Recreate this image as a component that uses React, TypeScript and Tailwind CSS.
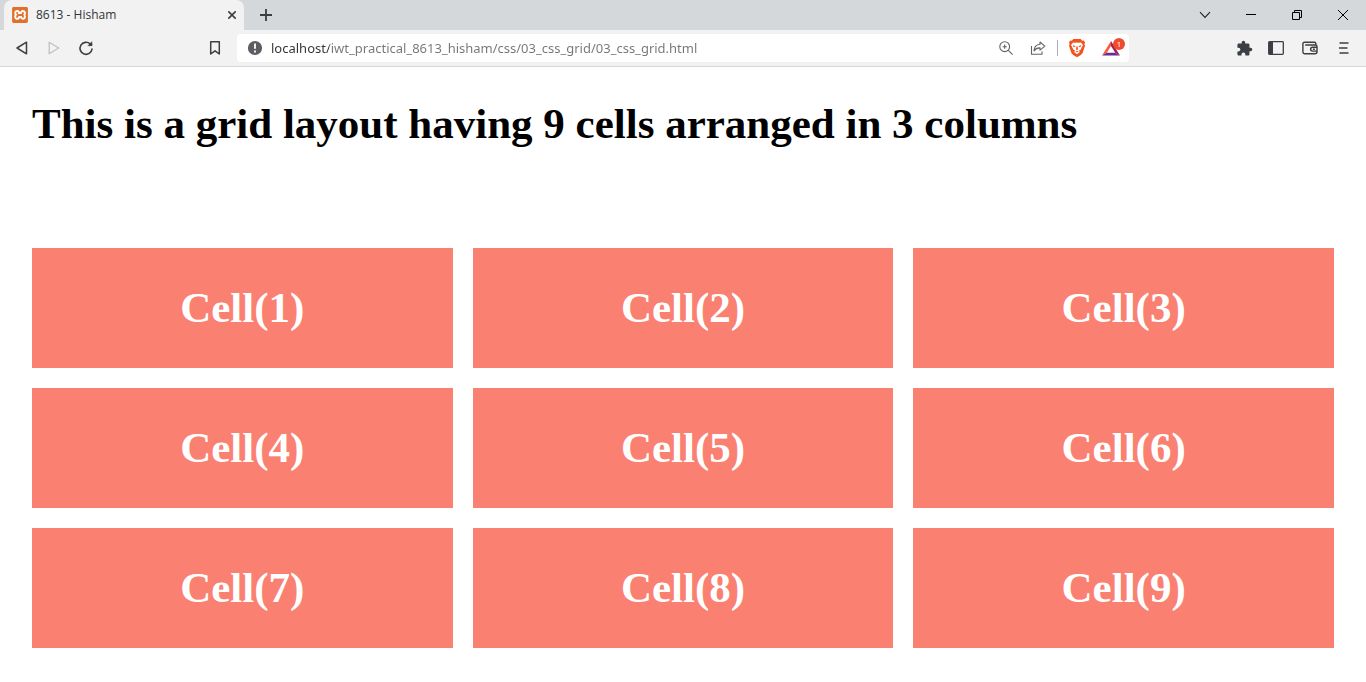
import type { ReactNode } from "react";
import { MdExtension } from "react-icons/md";
import { SiXampp } from "react-icons/si";

function IconButton({ label, className, children }: { label: string; className?: string; children: ReactNode }) {
  return (
    <button type="button" aria-label={label} className={"flex h-7 shrink-0 items-center justify-center text-[#3b3e42] " + (className ?? "w-8")}>
      {children}
    </button>
  );
}

function TabStrip() {
  return (
    <header className="flex h-[30px] items-stretch bg-[#d4d8db] pl-1">
      <div className="flex w-60 items-center rounded-t-lg bg-[#f2f2f2] pr-1 pl-2">
        <span className="h-4 w-4 shrink-0 rounded-sm bg-white">
          <SiXampp className="h-4 w-4 text-[#e0702a]" />
        </span>
        <span className="flex-1 truncate pl-2 font-['Open_Sans','Noto_Sans',sans-serif] text-xs text-[#303438]">8613 - Hisham</span>
        <IconButton label="Close tab" className="w-4">
          <svg width="8" height="8" viewBox="0 0 8 8" fill="none" stroke="currentColor" strokeWidth="1.6">
            <path d="M0.3 0.3 7.7 7.7M7.7 0.3 0.3 7.7" />
          </svg>
        </IconButton>
      </div>
      <div className="flex flex-1 items-center pl-1.5">
        <IconButton label="New tab">
          <svg width="12" height="12" viewBox="0 0 12 12" fill="none" stroke="currentColor" strokeWidth="1.8">
            <path d="M6 0V12M0 6H12" />
          </svg>
        </IconButton>
      </div>
      <div className="flex items-center">
        <IconButton label="Search tabs" className="w-[46px]">
          <svg width="12" height="12" viewBox="0 0 12 12" fill="none" stroke="#222" strokeWidth="1.1">
            <path d="M1 3.2 6 8.5 11 3.2" />
          </svg>
        </IconButton>
        <IconButton label="Minimize" className="w-[46px]">
          <svg width="10" height="10" viewBox="0 0 10 10" fill="none" stroke="#000">
            <path d="M0 4.5H10" />
          </svg>
        </IconButton>
        <IconButton label="Restore" className="w-[46px]">
          <svg width="10" height="10" viewBox="0 0 10 10" fill="none" stroke="#000">
            <path d="M0.5 2.5H7.5V9.5H0.5ZM2.5 2.5V0.5H9.5V7.5H7.5" />
          </svg>
        </IconButton>
        <IconButton label="Close window" className="w-[46px]">
          <svg width="10" height="10" viewBox="0 0 10 10" fill="none" stroke="#000">
            <path d="M0 0 10 10M10 0 0 10" />
          </svg>
        </IconButton>
      </div>
    </header>
  );
}

function AddressBar() {
  return (
    <div className="flex h-7 w-[892px] min-w-0 items-center rounded bg-white pl-2.5">
      <svg className="shrink-0" width="16" height="16" viewBox="0 0 16 16" role="img" aria-label="Connection is not secure">
        <circle cx="8" cy="8" r="7.1" fill="#5a5d61" />
        <path d="M8 3.4V8.8M8 10.6V12.4" stroke="#fff" strokeWidth="1.8" />
      </svg>
      <input
        type="text"
        aria-label="Address"
        defaultValue="localhost/iwt_practical_8613_hisham/css/03_css_grid/03_css_grid.html"
        className="ml-2 h-7 min-w-0 flex-1 bg-[linear-gradient(90deg,#303438_58px,#737679_58px)] bg-clip-text font-['Noto_Sans','Open_Sans',sans-serif] text-[13px] text-transparent outline-none"
      />
      <IconButton label="Zoom level">
        <svg width="16" height="16" viewBox="0 0 16 16" fill="none" stroke="#5f6368" strokeWidth="1.1">
          <circle cx="6.7" cy="6.7" r="4.9" />
          <path d="M10.3 10.3 14.6 14.6M6.7 4.6V8.8M4.6 6.7H8.8" />
        </svg>
      </IconButton>
      <IconButton label="Share this page">
        <svg width="16" height="16" viewBox="0 0 16 16" fill="none" stroke="#5f6368" strokeWidth="1.1" strokeLinejoin="round">
          <path d="M1.5 6V14.2H12V11.5" />
          <path d="M10 2 14.9 6.1 10 10.2V7.9C7.2 7.8 5.4 8.8 4 10.9 4.3 7.2 6.5 4.6 10 4.3Z" />
        </svg>
      </IconButton>
      <span className="mx-[3px] h-4 w-px bg-[#a9acb0]" />
      <IconButton label="Brave Shields">
        <svg width="18" height="20" viewBox="0 0 18 20">
          <path d="M5.4 1H12.6L14.2 2.7 15.8 2.5 17 4.6 16.4 6.3 17 7.7 14.6 15 12.8 17 9 19.3 5.2 17 3.4 15 1 7.7 1.6 6.3 1 4.6 2.2 2.5 3.8 2.7Z" fill="#f4511e" />
          <path d="M5 4.4 7 4.8 9 4.4 11 4.8 13 4.4 15 7 13.4 10.1 12.8 11.6 11 12.4 11.8 14.1 9 16.3 6.2 14.1 7 12.4 5.2 11.6 4.6 10.1 3 7Z" fill="#fff" />
          <path d="M4.7 7.2 7.5 7.9 6.8 9.1 5.2 8.7ZM13.3 7.2 10.5 7.9 11.2 9.1 12.8 8.7ZM8.5 8.2H9.5L10 11.2 9 12.2 8 11.2ZM7.2 13.4 9 12.9 10.8 13.4 9 14.3Z" fill="#f4511e" />
        </svg>
      </IconButton>
      <IconButton label="Brave Rewards, 1 notification" className="relative w-9">
        <svg width="20" height="18" viewBox="0 0 20 18">
          <path d="M10 2 1 16.5 5.8 13.7 10 7Z" fill="#ff5a36" />
          <path d="M10 2 19 16.5 14.2 13.7 10 7Z" fill="#9e1f63" />
          <path d="M1 16.5H19L14.2 13.7H5.8Z" fill="#662d91" />
        </svg>
        <span className="absolute top-1 right-1 flex h-3 w-3 items-center justify-center rounded-full bg-[#f04b2d] font-['Open_Sans',sans-serif] text-[8px] text-white">1</span>
      </IconButton>
    </div>
  );
}

function Toolbar() {
  return (
    <nav aria-label="Browser toolbar" className="flex h-[37px] items-center border-b border-[#d5d7d9] bg-[#f2f2f2] px-1.5">
      <IconButton label="Back">
        <svg width="14" height="16" viewBox="0 0 14 16" fill="none" stroke="currentColor" strokeWidth="1.5" strokeLinejoin="round">
          <path d="M11.5 2.2V13.8L2 8Z" />
        </svg>
      </IconButton>
      <IconButton label="Forward">
        <svg width="14" height="16" viewBox="0 0 14 16" fill="none" stroke="#c0c1c3" strokeWidth="1.3" strokeLinejoin="round">
          <path d="M2.2 2.2V13.8L11.7 8Z" />
        </svg>
      </IconButton>
      <IconButton label="Reload">
        <svg width="16" height="16" viewBox="0 0 16 16" fill="none" stroke="currentColor" strokeWidth="1.6" strokeLinecap="round">
          <path d="M12.2 4A6 6 0 1 0 14 9" />
          <circle cx="12.6" cy="4.3" r="1.5" fill="currentColor" stroke="none" />
          <path d="M14 2V5.7H10.2Z" fill="currentColor" strokeWidth="0.5" />
        </svg>
      </IconButton>
      <div className="flex min-w-0 flex-1 items-center pl-[97px]">
        <IconButton label="Bookmark this page">
          <svg width="12" height="16" viewBox="0 0 12 16" fill="none" stroke="currentColor" strokeWidth="1.5" strokeLinejoin="round">
            <path d="M1.7 1.8H10.3V14L6 10.8 1.7 14Z" />
          </svg>
        </IconButton>
        <div className="flex min-w-0 flex-1 pl-1.5">
          <AddressBar />
        </div>
      </div>
      <IconButton label="Extensions">
        <MdExtension className="h-[17px] w-[17px]" />
      </IconButton>
      <IconButton label="Sidebar">
        <svg width="16" height="16" viewBox="0 0 16 16" fill="none" stroke="currentColor" strokeWidth="1.3">
          <rect x="0.7" y="1.7" width="14.6" height="12.6" rx="0.8" />
          <path d="M1 2H5V14H1Z" fill="currentColor" stroke="none" />
        </svg>
      </IconButton>
      <IconButton label="Wallet" className="w-9">
        <svg width="16" height="16" viewBox="0 0 16 16" fill="none" stroke="currentColor" strokeWidth="1.4" strokeLinejoin="round">
          <path d="M13.8 5V3.6Q13.8 2.3 12.5 2.3H2.5Q0.9 2.3 0.9 3.8V12Q0.9 13.7 2.5 13.7H13Q15 13.7 15 12V6.5Q15 5 13.5 5H3.2" />
          <path d="M15 7.3H10.7Q8.6 7.5 8.6 9.2T10.7 11.1H15M11 9.2H12.8" />
        </svg>
      </IconButton>
      <IconButton label="Menu">
        <svg width="10" height="12" viewBox="0 0 10 12" fill="none" stroke="currentColor" strokeWidth="1.4">
          <path d="M0.5 1H9.5M0 6H8.5M0.5 11H9.5" />
        </svg>
      </IconButton>
    </nav>
  );
}

const cells = [1, 2, 3, 4, 5, 6, 7, 8, 9];

export default function App() {
  return (
    <div className="min-h-screen bg-white">
      <TabStrip />
      <Toolbar />
      <main className="px-8 pt-8 pb-8 font-['Liberation_Serif','Times_New_Roman',serif] text-[43px] leading-[50px] font-bold">
        <h1 className="text-black">This is a grid layout having 9 cells arranged in 3 columns</h1>
        <div className="mt-[99px] grid grid-cols-3 gap-5 text-center text-white">
          {cells.map((n) => (
            <div key={n} className="bg-[#fa8072] py-[35px]">
              Cell({n})
            </div>
          ))}
        </div>
      </main>
    </div>
  );
}
